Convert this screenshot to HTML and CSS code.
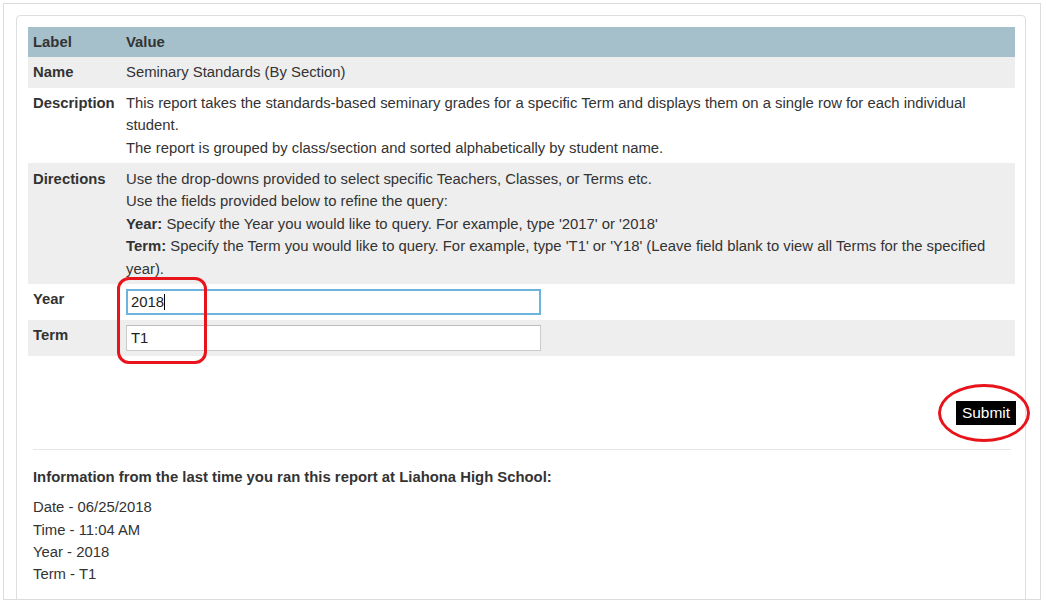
FILE: index.html
```html
<!DOCTYPE html>
<html>
<head>
<meta charset="utf-8">
<link rel="stylesheet" href="styles.css">
</head>
<body>
<div class="frame">
  <div class="panel">
    <table class="report">
      <thead>
        <tr><th class="lab">Label</th><th>Value</th></tr>
      </thead>
      <tbody>
        <tr class="alt"><td class="lab">Name</td><td>Seminary Standards (By Section)</td></tr>
        <tr><td class="lab">Description</td><td>This report takes the standards-based seminary grades for a specific Term and displays them on a single row for each individual student.<br>The report is grouped by class/section and sorted alphabetically by student name.</td></tr>
        <tr class="alt tall"><td class="lab">Directions</td><td>Use the drop-downs provided to select specific Teachers, Classes, or Terms etc.<br>Use the fields provided below to refine the query:<br><b>Year:</b> Specify the Year you would like to query. For example, type '2017' or '2018'<br><b>Term:</b> Specify the Term you would like to query. For example, type 'T1' or 'Y18' (Leave field blank to view all Terms for the specified year).</td></tr>
        <tr class="field-row"><td class="lab">Year</td><td><div class="field focused">2018<span class="caret"></span></div></td></tr>
        <tr class="alt field-row"><td class="lab">Term</td><td><div class="field">T1</div></td></tr>
      </tbody>
    </table>
    <div class="actions">
      <button class="submit">Submit</button>
    </div>
    <hr class="rule">
    <div class="info">
      <p class="info-title">Information from the last time you ran this report at Liahona High School:</p>
      <p>Date - 06/25/2018</p>
      <p>Time - 11:04 AM</p>
      <p>Year - 2018</p>
      <p>Term - T1</p>
    </div>
  </div>
  <div class="mark-box"></div>
  <div class="mark-ellipse"></div>
</div>
</body>
</html>
```

FILE: styles.css
```css
html, body {
  margin: 0;
  padding: 0;
  background: #ffffff;
}
body {
  font-family: "Liberation Sans", Arial, sans-serif;
  font-size: 14.85px;
  color: #333333;
}
.frame {
  position: relative;
  margin: 3px 0 0 3px;
  width: 1036px;
  height: 595px;
  border: 1px solid #dcdcdc;
  overflow: hidden;
}
.panel {
  margin: 11px 0 0 12px;
  width: 988px;
  height: 640px;
  border: 1px solid #dedede;
  border-radius: 4px;
  padding: 11px 9px 0 11px;
}
.report {
  width: 987px;
  border-collapse: collapse;
  line-height: 22.4px;
}
.report th, .report td {
  text-align: left;
  vertical-align: top;
  padding: 4px 5px;
}
.report th {
  background: #a5bfcb;
  font-weight: bold;
  padding: 4px 5px 4px 5px;
  height: 22px;
}
.report .lab {
  width: 83px;
  font-weight: bold;
}
.report tr.alt td {
  background: #eeeeee;
}
.report tr.tall td {
  padding-top: 5px;
}
.report tr.field-row td {
  padding-top: 5px;
  padding-bottom: 5px;
  height: 26px;
}
.report tr.field-row td.lab {
  padding-top: 4px;
}
.field {
  box-sizing: border-box;
  width: 415px;
  height: 26px;
  background: #ffffff;
  border: 1px solid #cccccc;
  border-top-color: #bdbdbd;
  padding: 0 4px;
  line-height: 24px;
  color: #222222;
}
.field.focused {
  border: 2px solid #6cb4db;
  padding: 0 3px;
  line-height: 22px;
}
.caret {
  display: inline-block;
  width: 1px;
  height: 16px;
  background: #000000;
  vertical-align: -3px;
}
.actions {
  display: flex;
  justify-content: flex-end;
  padding-top: 45px;
}
.submit {
  background: #000000;
  color: #ffffff;
  border: none;
  font-family: "Liberation Sans", Arial, sans-serif;
  font-size: 15.5px;
  height: 24px;
  width: 60px;
  padding: 0;
  border-radius: 0;
}
.rule {
  margin: 24px 5px 0 5px;
  border: none;
  border-top: 1px solid #e6e6e6;
  height: 0;
}
.info {
  padding: 0 5px;
}
.info p {
  margin: 0;
  line-height: 22.3px;
}
.info .info-title {
  font-weight: bold;
  margin: 16px 0 8px 0;
}
.mark-box {
  position: absolute;
  left: 113px;
  top: 273px;
  width: 84px;
  height: 81px;
  border: 3px solid #e8141b;
  border-radius: 12px;
}
.mark-ellipse {
  position: absolute;
  left: 934px;
  top: 380px;
  width: 86px;
  height: 52px;
  border: 3px solid #e8141b;
  border-radius: 50%;
}
```
